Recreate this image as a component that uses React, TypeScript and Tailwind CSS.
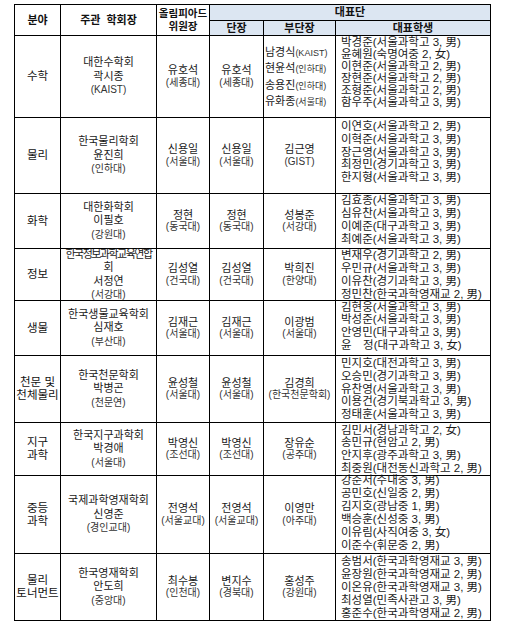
import React from "react";

type Row = {
  field: string[];
  society: string;
  chair: string;
  chairAff: string;
  comm: [string, string];
  leader: [string, string];
  vice: [string, string][];
  students: string[];
  lh: string;
};

const rows: Row[] = [
  {
    field: ["수학"],
    society: "대한수학회",
    chair: "곽시종",
    chairAff: "(KAIST)",
    comm: ["유호석", "(세종대)"],
    leader: ["유호석", "(세종대)"],
    vice: [
      ["남경식", "(KAIST)"],
      ["현윤석", "(인하대)"],
      ["송용진", "(인하대)"],
      ["유화종", "(서울대)"],
    ],
    students: [
      "박경준(서울과학고 3, 男)",
      "윤혜원(숙명여중 2, 女)",
      "이현준(서울과학고 2, 男)",
      "장현준(서울과학고 2, 男)",
      "조형준(서울과학고 2, 男)",
      "함우주(서울과학고 3, 男)",
    ],
    lh: "leading-[12px] pb-[9px]",
  },
  {
    field: ["물리"],
    society: "한국물리학회",
    chair: "윤진희",
    chairAff: "(인하대)",
    comm: ["신용일", "(서울대)"],
    leader: ["신용일", "(서울대)"],
    vice: [["김근영", "(GIST)"]],
    students: [
      "이연호(서울과학고 2, 男)",
      "이혁준(서울과학고 3, 男)",
      "장근영(서울과학고 3, 男)",
      "최정민(경기과학고 3, 男)",
      "한지형(서울과학고 3, 男)",
    ],
    lh: "leading-[12.8px] pb-[7px]",
  },
  {
    field: ["화학"],
    society: "대한화학회",
    chair: "이필호",
    chairAff: "(강원대)",
    comm: ["정현", "(동국대)"],
    leader: ["정현", "(동국대)"],
    vice: [["성봉준", "(서강대)"]],
    students: [
      "김효종(서울과학고 3, 男)",
      "심유찬(서울과학고 3, 男)",
      "이예준(대구과학고 3, 男)",
      "최예준(서울과학고 3, 男)",
    ],
    lh: "leading-[13px] pb-[3px]",
  },
  {
    field: ["정보"],
    society: "한국정보과학교육연합회",
    chair: "서정연",
    chairAff: "(서강대)",
    comm: ["김성열", "(건국대)"],
    leader: ["김성열", "(건국대)"],
    vice: [["박희진", "(한양대)"]],
    students: [
      "변재우(경기과학고 2, 男)",
      "우민규(서울과학고 3, 男)",
      "이유찬(경기과학고 3, 男)",
      "정민찬(한국과학영재교 2, 男)",
    ],
    lh: "leading-[13px]",
  },
  {
    field: ["생물"],
    society: "한국생물교육학회",
    chair: "심재호",
    chairAff: "(부산대)",
    comm: ["김재근", "(서울대)"],
    leader: ["김재근", "(서울대)"],
    vice: [["이광범", "(서울대)"]],
    students: [
      "김현웅(서울과학고 3, 男)",
      "박성준(서울과학고 3, 男)",
      "안영민(대구과학고 3, 男)",
      "윤　정(대구과학고 3, 女)",
    ],
    lh: "leading-[12.7px] pb-[4px]",
  },
  {
    field: ["천문 및", "천체물리"],
    society: "한국천문학회",
    chair: "박병곤",
    chairAff: "(천문연)",
    comm: ["윤성철", "(서울대)"],
    leader: ["윤성철", "(서울대)"],
    vice: [["김경희", "(한국천문학회)"]],
    students: [
      "민지호(대전과학고 3, 男)",
      "오승민(경기과학고 3, 男)",
      "유찬영(서울과학고 3, 男)",
      "이용건(경기북과학고 3, 男)",
      "정태훈(서울과학고 3, 男)",
    ],
    lh: "leading-[12.7px]",
  },
  {
    field: ["지구", "과학"],
    society: "한국지구과학회",
    chair: "박경애",
    chairAff: "(서울대)",
    comm: ["박영신", "(조선대)"],
    leader: ["박영신", "(조선대)"],
    vice: [["장유순", "(공주대)"]],
    students: [
      "김민서(경남과학고 2, 女)",
      "송민규(현암고 2, 男)",
      "안지후(광주과학고 3, 男)",
      "최중원(대전동신과학고 2, 男)",
    ],
    lh: "leading-[12.7px]",
  },
  {
    field: ["중등", "과학"],
    society: "국제과학영재학회",
    chair: "신영준",
    chairAff: "(경인교대)",
    comm: ["전영석", "(서울교대)"],
    leader: ["전영석", "(서울교대)"],
    vice: [["이영만", "(아주대)"]],
    students: [
      "강준서(수내중 3, 男)",
      "공민호(신일중 2, 男)",
      "김지호(광남중 1, 男)",
      "백승훈(신성중 3, 男)",
      "이유림(사직여중 3, 女)",
      "이준수(휘문중 2, 男)",
    ],
    lh: "leading-[13px] pb-[4px]",
  },
  {
    field: ["물리", "토너먼트"],
    society: "한국영재학회",
    chair: "안도희",
    chairAff: "(중앙대)",
    comm: ["최수봉", "(인천대)"],
    leader: ["변지수", "(경북대)"],
    vice: [["홍성주", "(강원대)"]],
    students: [
      "송범서(한국과학영재교 3, 男)",
      "윤장원(한국과학영재교 2, 男)",
      "이온유(한국과학영재교 3, 男)",
      "최성열(민족사관고 3, 男)",
      "홍준수(한국과학영재교 2, 男)",
    ],
    lh: "leading-[13px]",
  },
];

const cell = "bg-white flex flex-col items-center justify-center text-center";
const head = "bg-[#dce6f2] flex items-center justify-center font-bold text-[11px] leading-[13px] text-[#111]";

function NameAff({ v }: { v: [string, string] }) {
  return (
    <div className={cell + " leading-[12.5px] whitespace-nowrap"}>
      <div className="text-[11px] text-[#1a1a1a]">{v[0]}</div>
      <div className="text-[10px] text-[#333]">{v[1]}</div>
    </div>
  );
}

export default function App() {
  return (
    <div className="w-[506px] h-[628px] bg-white pl-[14px] pt-[4px] font-['Liberation_Sans','Noto_Sans_CJK_KR',sans-serif] text-[#1a1a1a]">
      <div className="inline-grid bg-black p-px gap-px grid-cols-[45px_95px_52px_53px_71px_154px] grid-rows-[15px_14px_81px_75px_54px_51px_54px_66px_52px_77px_66px]">
        <div className="bg-white row-span-2 flex items-center justify-center font-bold text-[11px] text-[#111]">분야</div>
        <div className="bg-white row-span-2 flex items-center justify-center font-bold text-[11px] text-[#111]">주관&nbsp;&nbsp;학회장</div>
        <div className="bg-white row-span-2 flex flex-col items-center justify-center font-bold text-[10.5px] leading-[13px] text-[#111] whitespace-nowrap">
          <div>올림피아드</div>
          <div>위원장</div>
        </div>
        <div className={head + " col-span-3"}>대표단</div>
        <div className={head}>단장</div>
        <div className={head}>부단장</div>
        <div className={head}>대표학생</div>

        {rows.map((r, i) => (
          <React.Fragment key={i}>
            <div className={cell + " text-[11.5px] leading-[13px] text-[#111] whitespace-nowrap"}>
              {r.field.map((f, j) => (
                <div key={j}>{f}</div>
              ))}
            </div>
            <div className={cell + " leading-[13.5px] whitespace-nowrap"}>
              {r.society === "한국정보과학교육연합회" ? (
                <>
                  <div className="text-[11px] tracking-[-1.5px]">한국정보과학교육연합</div>
                  <div className="text-[11px]">회</div>
                </>
              ) : (
                <div className="text-[11px]">{r.society}</div>
              )}
              <div className="text-[11px]">{r.chair}</div>
              <div className="text-[10px] text-[#333]">{r.chairAff}</div>
            </div>
            <NameAff v={r.comm} />
            <NameAff v={r.leader} />
            {r.vice.length > 1 ? (
              <div className="bg-white flex flex-col justify-center items-start pl-px leading-[14.5px] whitespace-nowrap">
                {r.vice.map((v, j) => (
                  <div key={j}>
                    <span className="text-[11px]">{v[0]}</span>
                    <span className="text-[9px] text-[#333]">{v[1]}</span>
                  </div>
                ))}
              </div>
            ) : (
              <NameAff v={r.vice[0]} />
            )}
            <div className={"bg-white flex flex-col justify-center items-start pl-[5px] text-[11.5px] whitespace-pre " + r.lh}>
              {r.students.map((s, j) => (
                <div key={j}>{s}</div>
              ))}
            </div>
          </React.Fragment>
        ))}
      </div>
    </div>
  );
}
